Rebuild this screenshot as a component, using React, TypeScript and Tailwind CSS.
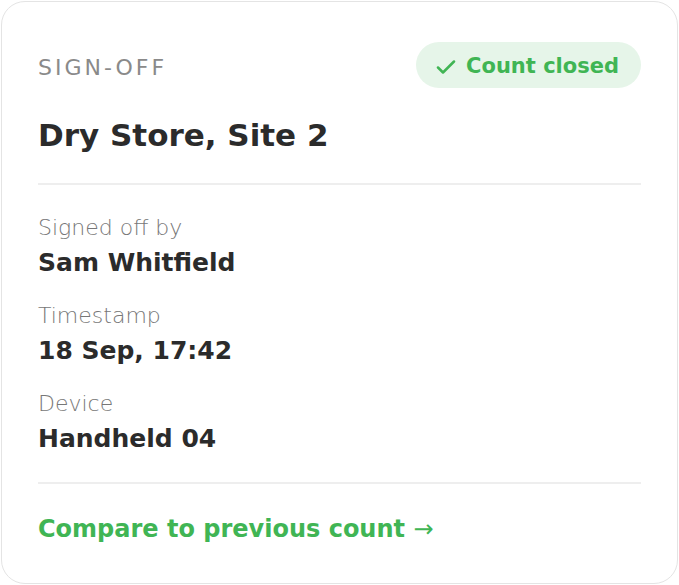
const rows = [
  { label: "Signed off by", value: "Sam Whitfield" },
  { label: "Timestamp", value: "18 Sep, 17:42" },
  { label: "Device", value: "Handheld 04" },
]

const App = () => {
  return (
    <div className="bg-white w-[679px] h-[585px] p-px" style={{ fontFamily: '"DejaVu Sans", sans-serif' }}>
      <div className="h-full rounded-[24px] border border-[#e4e4e4] bg-white px-[36px] pt-[40px]">
        <div className="flex items-center justify-between h-[46px]">
          <span className="pt-[6px] text-[22px] leading-[28px] tracking-[3px] text-[#8a8a8a]">SIGN-OFF</span>
          <span className="flex items-center gap-[10px] h-[46px] pl-[20px] pr-[22px] pt-[3px] rounded-full bg-[#e6f5e9] text-[#40b554] text-[21px] font-bold">
            <svg width="20" height="14" viewBox="0 0 20 14" fill="none" stroke="currentColor" strokeWidth="2.5" strokeLinecap="round" strokeLinejoin="round">
              <path d="M2 7.5l5 5L18 1.5" />
            </svg>
            Count closed
          </span>
        </div>
        <h1 className="mt-[28px] text-[31px] leading-[38px] font-bold text-[#2b2b2b]">Dry Store, Site 2</h1>
        <div className="mt-[29px] h-[2px] bg-[#eeeeee]" />
        <div className="pt-[29px] flex flex-col gap-[24px]">
          {rows.map((r) => (
            <div key={r.label} className="flex flex-col gap-[6px]">
              <span className="text-[22px] leading-[28px] font-extralight text-[#777777]">{r.label}</span>
              <span className="text-[25px] leading-[30px] font-bold text-[#2b2b2b]">{r.value}</span>
            </div>
          ))}
        </div>
        <div className="mt-[28px] h-[2px] bg-[#eeeeee]" />
        <div className="mt-[30px] text-[24px] leading-[30px] font-bold text-[#40b554]">
          Compare to previous count <span className="font-normal">→</span>
        </div>
      </div>
    </div>
  )
}

export default App
